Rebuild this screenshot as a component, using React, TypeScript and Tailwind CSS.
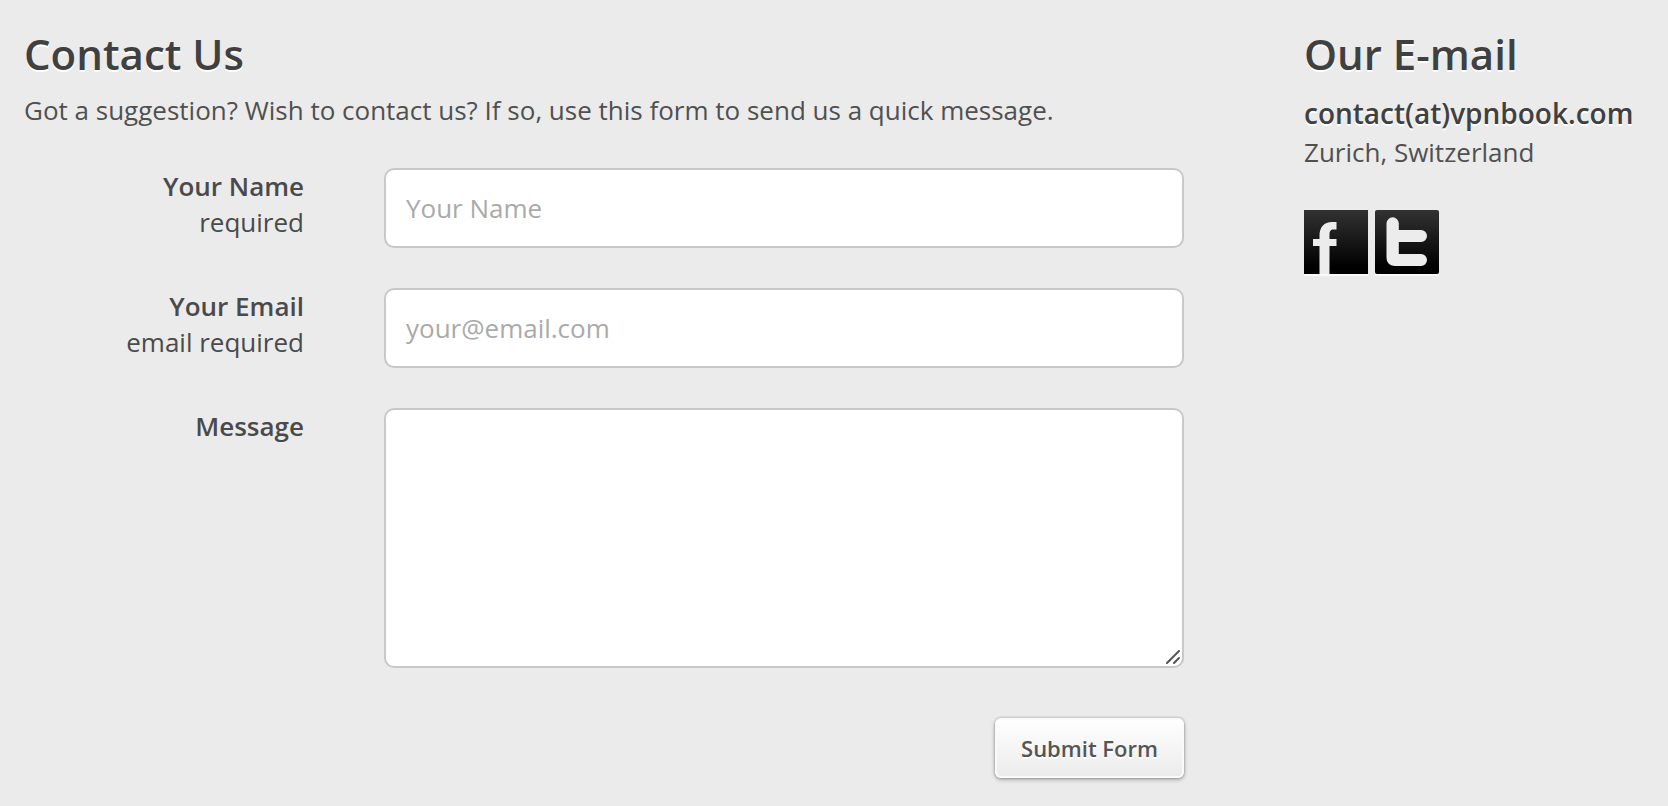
import type { ReactNode } from "react";

const fieldClass =
  "block w-full rounded-[10px] border-2 border-[#c8c8c8] bg-white px-5 text-[26px] text-[#555] outline-none placeholder:text-[#aaa] focus:border-[#999]";

const headingClass = "text-[42px] leading-[44px] font-semibold text-[#404040] [text-shadow:0_2px_0_#fff]";

function Row({ id, label, note, children }: { id: string; label: string; note?: string; children: ReactNode }) {
  return (
    <div className="grid grid-cols-[280px_minmax(0,1fr)] gap-20">
      <label htmlFor={id} className="text-right text-[26px] leading-9 text-[#4a4a4a]">
        <span className="block font-semibold">{label}</span>
        {note && <span className="block">{note}</span>}
      </label>
      {children}
    </div>
  );
}

function SocialIcon({ id, radius, path }: { id: string; radius: number; path: string }) {
  return (
    <svg viewBox="0 0 64 64" className="size-16" aria-hidden="true">
      <defs>
        <linearGradient id={`${id}-fill`} x1="0" y1="0" x2="0" y2="1">
          <stop offset="0" stopColor="#323232" />
          <stop offset="0.9" stopColor="#000" />
        </linearGradient>
        <filter id={`${id}-soft`}>
          <feGaussianBlur stdDeviation="0.7" />
        </filter>
      </defs>
      <rect width="64" height="64" rx={radius} fill={`url(#${id}-fill)`} />
      <path d={path} fill="#ececec" filter={`url(#${id}-soft)`} />
    </svg>
  );
}

export default function App() {
  return (
    <div className="min-h-screen bg-[#ebebeb] px-6 pt-8 pb-6 font-['Open_Sans',sans-serif] text-[#505050]">
      <div className="flex gap-[120px]">
        <main className="min-w-0 flex-1">
          <h1 className={headingClass}>Contact Us</h1>
          <p className="mt-4 text-[26px] leading-9">
            Got a suggestion? Wish to contact us? If so, use this form to send us a quick message.
          </p>
          <form className="mt-10 flex flex-col gap-10" onSubmit={(e) => e.preventDefault()}>
            <Row id="name" label="Your Name" note="required">
              <input id="name" type="text" placeholder="Your Name" className={`${fieldClass} h-20`} />
            </Row>
            <Row id="email" label="Your Email" note="email required">
              <input id="email" type="email" placeholder="your@email.com" className={`${fieldClass} h-20`} />
            </Row>
            <Row id="message" label="Message">
              <div className="relative">
                <textarea id="message" className={`${fieldClass} h-[260px] resize-none py-4`} />
                <svg
                  viewBox="0 0 14 14"
                  className="pointer-events-none absolute right-1 bottom-1 size-[14px]"
                  fill="none"
                  stroke="#555"
                  strokeWidth="2"
                  strokeLinecap="round"
                  aria-hidden="true"
                >
                  <path d="M1 13L13 1M8 13L13 8" />
                </svg>
              </div>
            </Row>
            <div className="mt-[10px] flex justify-end">
              <button
                type="submit"
                className="h-[60px] rounded-md border-2 border-[#fafafa] bg-linear-to-b from-white to-[#ebebeb] px-6 text-[22px] font-semibold text-[#555] shadow-[0_0_2px_1px_rgba(0,0,0,0.15),0_2px_4px_rgba(0,0,0,0.25)] [text-shadow:0_2px_0_#fff]"
              >
                Submit Form
              </button>
            </div>
          </form>
        </main>
        <aside className="w-[340px] shrink-0">
          <h2 className={headingClass}>Our E-mail</h2>
          <p className="mt-4 text-[28px] leading-[42px] font-semibold whitespace-nowrap text-[#404040] [text-shadow:0_2px_0_#fff]">
            contact(at)vpnbook.com
          </p>
          <p className="text-[26px] leading-9">Zurich, Switzerland</p>
          <div className="mt-10 flex gap-[7px]">
            <a href="#facebook" aria-label="Facebook" className="shadow-[0_2px_0_#fafafa]">
              <SocialIcon
                id="facebook"
                radius={0}
                path="M15.500 64V36H9V29H15.500V26C15.500 17 20 12 28 12H32.500V19.500H29.500C26.500 19.500 25.500 21.500 25.500 24.500V29H32.500V36H25.500V64Z"
              />
            </a>
            <a href="#twitter" aria-label="Twitter" className="shadow-[0_2px_0_#fafafa]">
              <SocialIcon
                id="twitter"
                radius={2}
                path="M11.500 13.500A6 6 0 0 1 23.800 13.500V20H46A6 6 0 0 1 46 32H23.800V44H46A6 6 0 0 1 46 56H20C14.500 56 11.500 52.500 11.500 47Z"
              />
            </a>
          </div>
        </aside>
      </div>
    </div>
  );
}
